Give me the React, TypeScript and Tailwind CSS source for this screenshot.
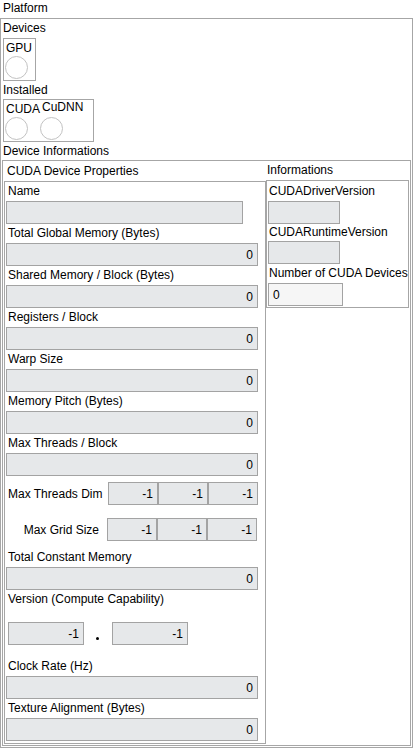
import React from "react";

// LabVIEW-style front panel: Platform / Devices / CUDA device info

const PROPS = [
  { label: "Name", value: "", narrow: true },
  { label: "Total Global Memory (Bytes)", value: "0" },
  { label: "Shared Memory / Block (Bytes)", value: "0" },
  { label: "Registers / Block", value: "0" },
  { label: "Warp Size", value: "0" },
  { label: "Memory Pitch (Bytes)", value: "0" },
  { label: "Max Threads / Block", value: "0" },
];

function Label({ text, className = "" }: { text: string; className?: string }) {
  return <div className={`whitespace-nowrap ${className}`}>{text}</div>;
}

function Field({ value, className = "" }: { value: string; className?: string }) {
  return (
    <div
      className={`flex h-[23px] items-center justify-end border border-[#a3a3a3] bg-[#e6e8ea] pr-[4px] ${className}`}
    >
      {value}
    </div>
  );
}

function Led() {
  return <div className="h-[23px] w-[23px] rounded-full border border-[#c2c2c2] bg-white" />;
}

function TripleRow({ label, labelClass }: { label: string; labelClass: string }) {
  return (
    <div className="flex h-[23px] items-center">
      <div className={labelClass}>{label}</div>
      <div className="flex">
        <Field value="-1" className="w-[50px]" />
        <Field value="-1" className="w-[50px]" />
        <Field value="-1" className="w-[50px]" />
      </div>
    </div>
  );
}

export default function App() {
  return (
    <div className="h-[748px] w-[413px] overflow-hidden bg-white font-['Liberation_Sans',Arial,sans-serif] text-[12px] leading-none text-black">
      <Label text="Platform" className="h-[18px] pl-[3px] leading-[16px]" />

      {/* outer Platform cluster */}
      <div className="h-[730px] border border-[#a6a6a6]">
        <Label text="Devices" className="h-[19px] pl-[2px] leading-[19px]" />

        {/* Devices */}
        <div className="ml-[2px] h-[43px] w-[33px] border border-[#a6a6a6]">
          <Label text="GPU" className="h-[17px] pl-[2px] leading-[18px]" />
          <div className="ml-[1px]">
            <Led />
          </div>
        </div>

        <Label text="Installed" className="h-[18px] pl-[2px] leading-[18px]" />

        {/* Installed */}
        <div className="ml-[2px] flex h-[43px] w-[91px] border border-[#a6a6a6]">
          <div className="ml-[1px] flex w-[35px] flex-col">
            <Label text="CUDA" className="h-[17px] pl-[1px] leading-[18px]" />
            <Led />
          </div>
          <div className="flex flex-col">
            <Label text="CuDNN" className="h-[17px] pl-[2px] leading-[14px]" />
            <Led />
          </div>
        </div>

        <Label text="Device Informations" className="h-[18px] pl-[2px] leading-[18px]" />

        {/* Device Informations */}
        <div className="ml-[1px] flex h-[586px] w-[409px] border border-[#a6a6a6]">
          {/* CUDA Device Properties */}
          <div className="flex flex-col">
            <Label text="CUDA Device Properties" className="h-[20px] pl-[4px] leading-[20px]" />
            <div className="ml-[1px] h-[563px] w-[262px] border border-[#a6a6a6] px-[1px]">
              {PROPS.map((p) => (
                <div key={p.label}>
                  <Label text={p.label} className="h-[19px] pl-[2px] leading-[19px]" />
                  <Field value={p.value} className={p.narrow ? "w-[237px]" : "w-[252px]"} />
                </div>
              ))}

              <div className="mt-[6px]">
                <TripleRow label="Max Threads Dim" labelClass="w-[102px] pl-[2px]" />
              </div>
              <div className="mt-[13px]">
                <TripleRow label="Max Grid Size" labelClass="w-[101px] pr-[8px] text-right" />
              </div>

              <Label text="Total Constant Memory" className="mt-[7px] h-[19px] pl-[2px] leading-[19px]" />
              <Field value="0" className="w-[252px]" />

              <Label text="Version (Compute Capability)" className="h-[19px] pl-[2px] leading-[19px]" />
              <div className="mt-[13px] flex items-center">
                <Field value="-1" className="ml-[2px] w-[76px]" />
                <div className="ml-[12px] mr-[13px] mt-[9px] h-[3px] w-[3px] rounded-full bg-black" />
                <Field value="-1" className="w-[76px]" />
              </div>

              <Label text="Clock Rate (Hz)" className="mt-[12px] h-[19px] pl-[2px] leading-[19px]" />
              <Field value="0" className="w-[252px]" />

              <Label text="Texture Alignment (Bytes)" className="h-[19px] pl-[2px] leading-[19px]" />
              <Field value="0" className="w-[252px]" />
            </div>
          </div>

          {/* Informations */}
          <div className="flex flex-col">
            <Label text="Informations" className="h-[19px] pl-[1px] leading-[19px]" />
            <div className="h-[128px] w-[143px] border border-[#a6a6a6] px-[1px]">
              <Label text="CUDADriverVersion" className="h-[20px] pl-[1px] leading-[20px]" />
              <Field value="" className="w-[72px]" />
              <Label text="CUDARuntimeVersion" className="h-[17px] pl-[1px] leading-[17px]" />
              <Field value="" className="w-[72px]" />
              <Label text="Number of CUDA Devices" className="h-[19px] pl-[1px] leading-[19px]" />
              <div className="flex h-[23px] w-[75px] items-center border border-[#a3a3a3] bg-[#f6f6f6] pl-[4px]">
                0
              </div>
            </div>
          </div>
        </div>
      </div>
    </div>
  );
}
